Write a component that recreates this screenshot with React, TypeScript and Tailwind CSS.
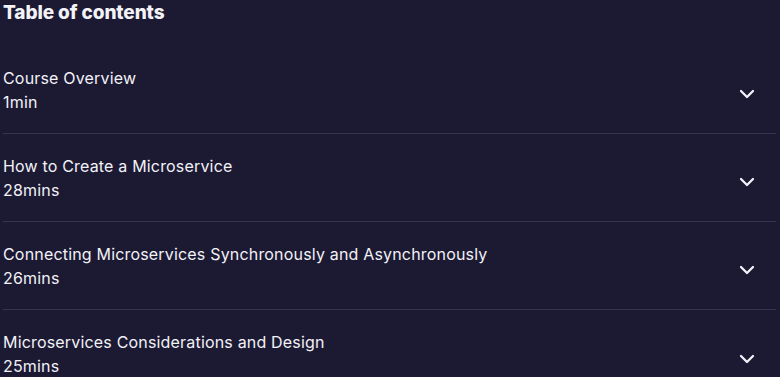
import { ChevronDown } from "lucide-react";

const sections = [
  { title: "Course Overview", duration: "1min" },
  { title: "How to Create a Microservice", duration: "28mins" },
  { title: "Connecting Microservices Synchronously and Asynchronously", duration: "26mins" },
  { title: "Microservices Considerations and Design", duration: "25mins" },
];

export default function App() {
  return (
    <div
      className="min-h-screen w-full overflow-hidden bg-[#1c1933] text-[#f2f2f7]"
      style={{ fontFamily: "Inter, 'Noto Sans', sans-serif" }}
    >
      <div className="ml-[3px] mr-[4px]">
        <h2 className="mb-[20px] text-[19px] font-extrabold leading-[26px] tracking-[-0.1px]">
          Table of contents
        </h2>
        <ul>
          {sections.map((s, i) => (
            <li
              key={s.title}
              className={
                i < sections.length - 1
                  ? "flex h-[88px] items-center justify-between border-b border-[#35334f]"
                  : "flex h-[88px] items-center justify-between"
              }
            >
              <div className="text-[16px] leading-[24px] tracking-[0.18px]">
                <div>{s.title}</div>
                <div>{s.duration}</div>
              </div>
              <ChevronDown className="mr-[17px] mt-[9px] h-6 w-6" strokeWidth={2.3} />
            </li>
          ))}
        </ul>
      </div>
    </div>
  );
}
